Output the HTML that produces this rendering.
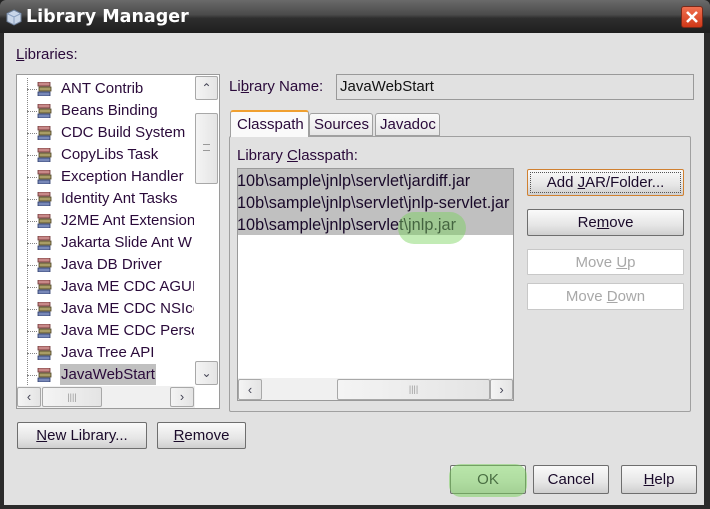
<!DOCTYPE html>
<html><head><style>
*{box-sizing:border-box;margin:0;padding:0}
body{width:710px;height:509px;overflow:hidden;background:#222;font-family:"Liberation Sans",sans-serif;font-size:15px;color:#2a0a3a;position:relative}
.a{position:absolute}
#win{left:0;top:0;width:710px;height:509px;background:#2b2b2b;border-radius:6px 6px 0 0}
#title{left:0;top:0;width:710px;height:33px;background:linear-gradient(#6a6a6a,#4a4a4a 45%,#2e2e2e 55%,#1e1e1e);border-radius:6px 6px 0 0}
#body{left:4px;top:33px;width:700px;height:472px;background:#e1e1e1}
.btn{position:absolute;border:1px solid #6e6e6e;border-radius:2px;background:linear-gradient(#fafafa,#e6e6e6 60%,#cfcfcf);text-align:center;line-height:25px;color:#1a0a2a}
.dis{border:1px solid #c8c8c8;background:#fff;color:#a8a8a8;border-radius:1px}
.item{position:absolute;left:0;height:22px;line-height:22px;white-space:nowrap}
.ico{position:absolute;left:20px;top:4px;width:16px;height:14px}
.dot{position:absolute;left:2px;top:11px;width:16px;border-top:1px dotted #888}
.sb{position:absolute;background:linear-gradient(90deg,#f4f4f4,#e4e4e4);border:1px solid #a8a8a8;border-radius:2px}
u{text-decoration:underline}
</style></head><body>
<div id="win" class="a"></div>
<div id="title" class="a"></div>
<svg class="a" style="left:6px;top:9px" width="16" height="17" viewBox="0 0 16 17"><path d="M8 1 L15 4.5 L15 12.5 L8 16 L1 12.5 L1 4.5Z" fill="#c9d6e8" stroke="#6d7f99"/><path d="M1 4.5 L8 8 L15 4.5 M8 8 L8 16" fill="none" stroke="#8aa0c0"/></svg>
<div class="a" style="left:26px;top:7px;font-size:17.5px;font-weight:bold;color:#fff;font-family:'DejaVu Sans',sans-serif">Library Manager</div>
<div class="a" style="left:681px;top:6px;width:22px;height:22px;background:linear-gradient(#f07050,#d03818);border:1px solid #7a2a1a;border-radius:3px"></div>
<svg class="a" style="left:681px;top:6px" width="22" height="22"><path d="M6 6 L16 16 M16 6 L6 16" stroke="#fff" stroke-width="2.6"/></svg>
<div id="body" class="a"></div>

<div class="a" style="left:16px;top:46px"><u>L</u>ibraries:</div>
<div class="a" style="left:16px;top:74px;width:204px;height:335px;background:#fff;border:1px solid #9a9a9a"></div>

<div class="sb" style="left:195px;top:76px;width:23px;height:24px;text-align:center;line-height:22px;font-size:12px;color:#445">&#8963;</div>
<div class="sb" style="left:195px;top:113px;width:23px;height:71px"><div style="position:absolute;left:7px;top:30px;width:7px;height:7px;border-top:1px solid #999;border-bottom:1px solid #999"></div></div>
<div class="sb" style="left:195px;top:361px;width:23px;height:24px;text-align:center;line-height:22px;font-size:12px;color:#445">&#8964;</div>
<div class="a" style="left:17px;top:386px;width:178px;height:22px;background:#f0f0f0"></div>
<div class="sb" style="left:17px;top:387px;width:24px;height:20px;text-align:center;line-height:18px;font-size:13px;color:#445">&#8249;</div>
<div class="sb" style="left:42px;top:387px;width:60px;height:20px;text-align:center;line-height:18px;font-size:9px;color:#999">||||</div>
<div class="sb" style="left:170px;top:387px;width:24px;height:20px;text-align:center;line-height:18px;font-size:13px;color:#445">&#8250;</div>

<div class="a" style="left:229px;top:78px">Li<u>b</u>rary Name:</div>
<div class="a" style="left:336px;top:74px;width:358px;height:26px;border:1px solid #999;background:#e1e1e1;padding-left:3px;line-height:24px;color:#111">JavaWebStart</div>

<div class="a" style="left:229px;top:136px;width:462px;height:276px;border:1px solid #a0a0a0;border-radius:2px;background:#e1e1e1"></div>
<div class="a" style="left:230px;top:110px;width:79px;height:27px;background:#fafafa;border:1px solid #a0a0a0;border-top:2px solid #f0a030;border-bottom:none;border-radius:3px 3px 0 0;padding-left:6px;line-height:25px">Classpath</div>
<div class="a" style="left:309px;top:113px;width:64px;height:23px;background:linear-gradient(#fafafa,#e6e6e6);border:1px solid #a0a0a0;border-radius:3px 3px 0 0;padding-left:4px;line-height:22px">Sources</div>
<div class="a" style="left:375px;top:113px;width:65px;height:23px;background:linear-gradient(#fafafa,#e6e6e6);border:1px solid #a0a0a0;border-radius:3px 3px 0 0;padding-left:4px;line-height:22px">Javadoc</div>

<div class="a" style="left:237px;top:147px">Library <u>C</u>lasspath:</div>
<div class="a" style="left:237px;top:168px;width:277px;height:233px;background:#fff;border:1px solid #999"></div>
<div class="a" style="left:238px;top:169px;width:275px;height:66px;background:#c0c0c0"></div>
<div class="a" style="left:237px;top:170px;width:276px;overflow:hidden;white-space:nowrap;line-height:22px;color:#1a0a2a;font-size:16.3px">10b\sample\jnlp\servlet\jardiff.jar<br>10b\sample\jnlp\servlet\jnlp-servlet.jar<br>10b\sample\jnlp\servlet\jnlp.jar</div>
<div class="a" style="left:398px;top:212px;width:68px;height:32px;border-radius:16px;background:rgba(120,210,90,.45)"></div>
<div class="a" style="left:238px;top:378px;width:275px;height:22px;background:#f0f0f0"></div>
<div class="sb" style="left:238px;top:379px;width:24px;height:21px;text-align:center;line-height:19px;font-size:13px;color:#445">&#8249;</div>
<div class="sb" style="left:337px;top:379px;width:153px;height:21px;text-align:center;line-height:19px;font-size:9px;color:#999">||||</div>
<div class="sb" style="left:490px;top:379px;width:23px;height:21px;text-align:center;line-height:19px;font-size:13px;color:#445">&#8250;</div>

<div class="btn" style="left:527px;top:169px;width:157px;height:27px;border-color:#d08030;outline:1px dotted #555;outline-offset:-4px">Add <u>J</u>AR/Folder...</div>
<div class="btn" style="left:527px;top:209px;width:157px;height:27px">Re<u>m</u>ove</div>
<div class="btn dis" style="left:527px;top:249px;width:157px;height:26px">Move <u>U</u>p</div>
<div class="btn dis" style="left:527px;top:283px;width:157px;height:27px">Move <u>D</u>own</div>

<div class="btn" style="left:17px;top:422px;width:130px;height:27px"><u>N</u>ew Library...</div>
<div class="btn" style="left:157px;top:422px;width:89px;height:27px"><u>R</u>emove</div>
<div class="btn" style="left:450px;top:465px;width:76px;height:29px;line-height:27px">OK</div>
<div class="a" style="left:449px;top:464px;width:78px;height:33px;border-radius:12px;background:rgba(120,210,90,.5)"></div>
<div class="btn" style="left:533px;top:465px;width:76px;height:29px;line-height:27px">Cancel</div>
<div class="btn" style="left:621px;top:465px;width:76px;height:29px;line-height:27px"><u>H</u>elp</div>

<div class="a" style="left:17px;top:78px;width:177px;height:307px;overflow:hidden;background:#fff">
<div style="position:absolute;left:10px;top:0;height:307px;border-left:1px dotted #888"></div>
<div class="item" style="top:0"><span class="dot" style="left:10px;width:10px"></span><svg class="ico" viewBox="0 0 16 14"><rect x="1" y="0" width="12" height="4" fill="#c88888" stroke="#6a3030" stroke-width=".8"/><rect x="2" y="5" width="12" height="4" fill="#a89c66" stroke="#4a4020" stroke-width=".8"/><rect x="1" y="10" width="12" height="4" fill="#7888b8" stroke="#283868" stroke-width=".8"/></svg><span style="position:absolute;left:44px">ANT Contrib</span></div>
<div class="item" style="top:22px"><span class="dot" style="left:10px;width:10px"></span><svg class="ico" viewBox="0 0 16 14"><rect x="1" y="0" width="12" height="4" fill="#c88888" stroke="#6a3030" stroke-width=".8"/><rect x="2" y="5" width="12" height="4" fill="#a89c66" stroke="#4a4020" stroke-width=".8"/><rect x="1" y="10" width="12" height="4" fill="#7888b8" stroke="#283868" stroke-width=".8"/></svg><span style="position:absolute;left:44px">Beans Binding</span></div>
<div class="item" style="top:44px"><span class="dot" style="left:10px;width:10px"></span><svg class="ico" viewBox="0 0 16 14"><rect x="1" y="0" width="12" height="4" fill="#c88888" stroke="#6a3030" stroke-width=".8"/><rect x="2" y="5" width="12" height="4" fill="#a89c66" stroke="#4a4020" stroke-width=".8"/><rect x="1" y="10" width="12" height="4" fill="#7888b8" stroke="#283868" stroke-width=".8"/></svg><span style="position:absolute;left:44px">CDC Build System</span></div>
<div class="item" style="top:66px"><span class="dot" style="left:10px;width:10px"></span><svg class="ico" viewBox="0 0 16 14"><rect x="1" y="0" width="12" height="4" fill="#c88888" stroke="#6a3030" stroke-width=".8"/><rect x="2" y="5" width="12" height="4" fill="#a89c66" stroke="#4a4020" stroke-width=".8"/><rect x="1" y="10" width="12" height="4" fill="#7888b8" stroke="#283868" stroke-width=".8"/></svg><span style="position:absolute;left:44px">CopyLibs Task</span></div>
<div class="item" style="top:88px"><span class="dot" style="left:10px;width:10px"></span><svg class="ico" viewBox="0 0 16 14"><rect x="1" y="0" width="12" height="4" fill="#c88888" stroke="#6a3030" stroke-width=".8"/><rect x="2" y="5" width="12" height="4" fill="#a89c66" stroke="#4a4020" stroke-width=".8"/><rect x="1" y="10" width="12" height="4" fill="#7888b8" stroke="#283868" stroke-width=".8"/></svg><span style="position:absolute;left:44px">Exception Handler</span></div>
<div class="item" style="top:110px"><span class="dot" style="left:10px;width:10px"></span><svg class="ico" viewBox="0 0 16 14"><rect x="1" y="0" width="12" height="4" fill="#c88888" stroke="#6a3030" stroke-width=".8"/><rect x="2" y="5" width="12" height="4" fill="#a89c66" stroke="#4a4020" stroke-width=".8"/><rect x="1" y="10" width="12" height="4" fill="#7888b8" stroke="#283868" stroke-width=".8"/></svg><span style="position:absolute;left:44px">Identity Ant Tasks</span></div>
<div class="item" style="top:132px"><span class="dot" style="left:10px;width:10px"></span><svg class="ico" viewBox="0 0 16 14"><rect x="1" y="0" width="12" height="4" fill="#c88888" stroke="#6a3030" stroke-width=".8"/><rect x="2" y="5" width="12" height="4" fill="#a89c66" stroke="#4a4020" stroke-width=".8"/><rect x="1" y="10" width="12" height="4" fill="#7888b8" stroke="#283868" stroke-width=".8"/></svg><span style="position:absolute;left:44px">J2ME Ant Extension</span></div>
<div class="item" style="top:154px"><span class="dot" style="left:10px;width:10px"></span><svg class="ico" viewBox="0 0 16 14"><rect x="1" y="0" width="12" height="4" fill="#c88888" stroke="#6a3030" stroke-width=".8"/><rect x="2" y="5" width="12" height="4" fill="#a89c66" stroke="#4a4020" stroke-width=".8"/><rect x="1" y="10" width="12" height="4" fill="#7888b8" stroke="#283868" stroke-width=".8"/></svg><span style="position:absolute;left:44px">Jakarta Slide Ant W</span></div>
<div class="item" style="top:176px"><span class="dot" style="left:10px;width:10px"></span><svg class="ico" viewBox="0 0 16 14"><rect x="1" y="0" width="12" height="4" fill="#c88888" stroke="#6a3030" stroke-width=".8"/><rect x="2" y="5" width="12" height="4" fill="#a89c66" stroke="#4a4020" stroke-width=".8"/><rect x="1" y="10" width="12" height="4" fill="#7888b8" stroke="#283868" stroke-width=".8"/></svg><span style="position:absolute;left:44px">Java DB Driver</span></div>
<div class="item" style="top:198px"><span class="dot" style="left:10px;width:10px"></span><svg class="ico" viewBox="0 0 16 14"><rect x="1" y="0" width="12" height="4" fill="#c88888" stroke="#6a3030" stroke-width=".8"/><rect x="2" y="5" width="12" height="4" fill="#a89c66" stroke="#4a4020" stroke-width=".8"/><rect x="1" y="10" width="12" height="4" fill="#7888b8" stroke="#283868" stroke-width=".8"/></svg><span style="position:absolute;left:44px">Java ME CDC AGUI</span></div>
<div class="item" style="top:220px"><span class="dot" style="left:10px;width:10px"></span><svg class="ico" viewBox="0 0 16 14"><rect x="1" y="0" width="12" height="4" fill="#c88888" stroke="#6a3030" stroke-width=".8"/><rect x="2" y="5" width="12" height="4" fill="#a89c66" stroke="#4a4020" stroke-width=".8"/><rect x="1" y="10" width="12" height="4" fill="#7888b8" stroke="#283868" stroke-width=".8"/></svg><span style="position:absolute;left:44px">Java ME CDC NSIcom</span></div>
<div class="item" style="top:242px"><span class="dot" style="left:10px;width:10px"></span><svg class="ico" viewBox="0 0 16 14"><rect x="1" y="0" width="12" height="4" fill="#c88888" stroke="#6a3030" stroke-width=".8"/><rect x="2" y="5" width="12" height="4" fill="#a89c66" stroke="#4a4020" stroke-width=".8"/><rect x="1" y="10" width="12" height="4" fill="#7888b8" stroke="#283868" stroke-width=".8"/></svg><span style="position:absolute;left:44px">Java ME CDC Persona</span></div>
<div class="item" style="top:264px"><span class="dot" style="left:10px;width:10px"></span><svg class="ico" viewBox="0 0 16 14"><rect x="1" y="0" width="12" height="4" fill="#c88888" stroke="#6a3030" stroke-width=".8"/><rect x="2" y="5" width="12" height="4" fill="#a89c66" stroke="#4a4020" stroke-width=".8"/><rect x="1" y="10" width="12" height="4" fill="#7888b8" stroke="#283868" stroke-width=".8"/></svg><span style="position:absolute;left:44px">Java Tree API</span></div>
<div class="item" style="top:286px"><span class="dot" style="left:10px;width:10px"></span><svg class="ico" viewBox="0 0 16 14"><rect x="1" y="0" width="12" height="4" fill="#c88888" stroke="#6a3030" stroke-width=".8"/><rect x="2" y="5" width="12" height="4" fill="#a89c66" stroke="#4a4020" stroke-width=".8"/><rect x="1" y="10" width="12" height="4" fill="#7888b8" stroke="#283868" stroke-width=".8"/></svg><span style="position:absolute;left:43px;background:#c0c0c0;padding:0 1px">JavaWebStart</span></div>
</div>
</body></html>
